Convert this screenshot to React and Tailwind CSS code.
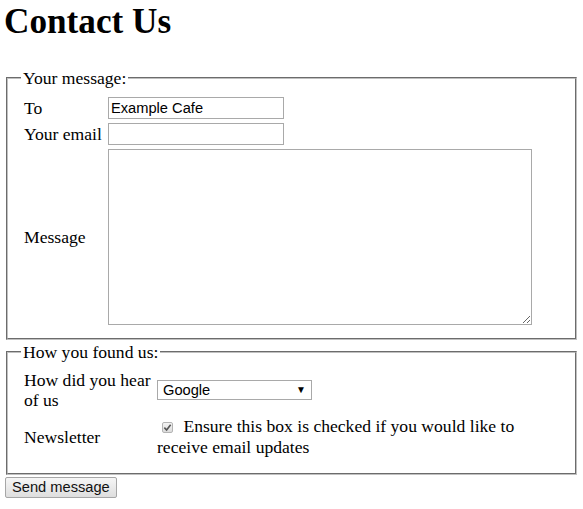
import React from 'react';

// Plain HTML-style contact form: two fieldsets and a submit button
export default function App() {
  return (
    <div className="font-['Liberation_Serif',serif] text-[17.6px] leading-[20.2px] text-black bg-white min-h-[509px] w-[583px]">
      <h1 className="text-[35.2px] font-bold leading-[40px] pt-[2px] pl-[4px]">Contact Us</h1>

      <form className="mt-[26px]" onSubmit={(e) => e.preventDefault()}>
        {/* Your message */}
        <fieldset className="ml-[6px] w-[571px] border-2 [border-style:groove] border-[#c0c0c0] px-[13px] pt-[6px] pb-[13px]">
          <legend className="px-[2px] leading-[20px]">Your message:</legend>
          <div className="grid grid-cols-[87px_1fr] gap-y-[4px] pt-[3px]">
            <label className="pl-[3px] self-center">To</label>
            <input
              type="text"
              defaultValue="Example Cafe"
              className="w-[176px] h-[22px] border border-[#a9a9a9] px-[2px] font-['Liberation_Sans',sans-serif] text-[14.67px] outline-none"
            />
            <label className="pl-[3px] self-center">Your email</label>
            <input
              type="email"
              className="w-[176px] h-[22px] border border-[#a9a9a9] px-[2px] font-['Liberation_Sans',sans-serif] text-[14.67px] outline-none"
            />
            <label className="pl-[3px] self-center">Message</label>
            <textarea className="block w-[424px] h-[176px] border border-[#a9a9a9] p-[2px] font-['Liberation_Mono',monospace] text-[14.67px] outline-none" />
          </div>
        </fieldset>

        {/* How you found us */}
        <fieldset className="mt-[2px] ml-[6px] w-[571px] border-2 [border-style:groove] border-[#c0c0c0] px-[13px] pt-[6px] pb-[16px]">
          <legend className="px-[2px] leading-[20px]">How you found us:</legend>
          <div className="grid grid-cols-[136px_1fr] gap-y-[6px] pt-[2px]">
            <label className="pl-[3px] self-center">How did you hear<br />of us</label>
            <div className="self-center flex items-center justify-between w-[155px] h-[20px] border border-[#a9a9a9] bg-white pl-[5px] pr-[5px] font-['Liberation_Sans',sans-serif] text-[14.67px] leading-[18px]">
              <span>Google</span>
              <span className="text-[10px] leading-none">▼</span>
            </div>
            <label className="pl-[3px] self-center">Newsletter</label>
            <div className="self-center">
              <span className="inline-flex items-center justify-center w-[11px] h-[11px] ml-[5px] mr-[6px] mb-[-1px] border border-[#b4b4b4] rounded-[2px] bg-gradient-to-b from-[#f4f4f4] to-[#dcdcdc]">
                <svg width="9" height="9" viewBox="0 0 10 10">
                  <path d="M1.5 5.2 L4 7.8 L8.5 2" fill="none" stroke="#555" strokeWidth="1.8" />
                </svg>
              </span>{' '}
              Ensure this box is checked if you would like to<br />receive email updates
            </div>
          </div>
        </fieldset>

        <button
          type="submit"
          className="mt-[2px] ml-[5px] h-[21px] px-[6px] border border-[#a6a6a6] rounded-[2px] bg-gradient-to-b from-[#f6f6f6] to-[#dedede] font-['Liberation_Sans',sans-serif] text-[14.67px] leading-[18px] text-[#111]"
        >
          Send message
        </button>
      </form>
    </div>
  );
}
